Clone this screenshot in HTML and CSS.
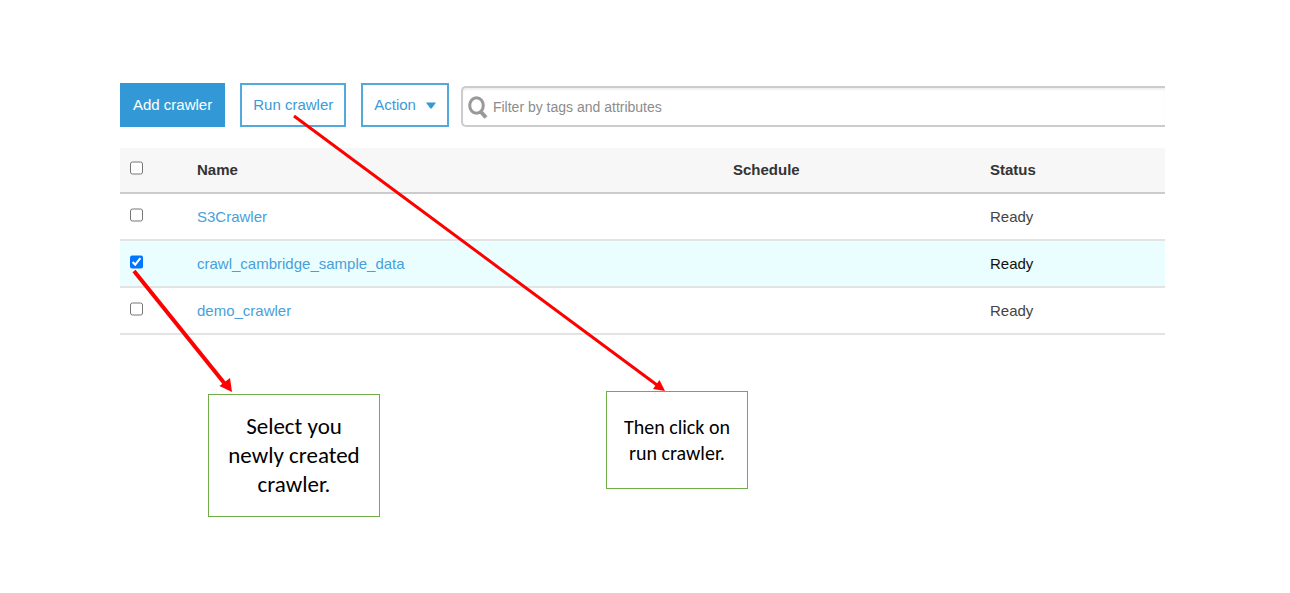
FILE: index.html
```html
<!DOCTYPE html>
<html lang="en">
<head>
<meta charset="utf-8">
<title>Crawlers</title>
<link rel="stylesheet" href="styles.css">
</head>
<body>
<main class="page">
  <div class="toolbar">
    <button class="btn btn-primary" type="button">Add crawler</button>
    <button class="btn" type="button">Run crawler</button>
    <button class="btn btn-menu" type="button">Action
      <svg class="caret" viewBox="0 0 10 7" aria-hidden="true"><path d="M0 0.5h10L5.8 6.3q-.8.9-1.6 0z"/></svg>
    </button>
    <label class="search">
      <svg class="search-icon" viewBox="0 0 20 24" aria-hidden="true"><ellipse cx="8.500" cy="10.500" rx="6.800" ry="7.800"/><path class="handle" d="M13 17l5 5.500"/></svg>
      <input type="text" placeholder="Filter by tags and attributes" aria-label="Filter by tags and attributes">
    </label>
  </div>

  <table class="crawlers">
    <colgroup><col class="col-check"><col><col class="col-schedule"><col class="col-status"></colgroup>
    <thead>
      <tr><th><input type="checkbox" aria-label="Select all"></th><th>Name</th><th>Schedule</th><th>Status</th></tr>
    </thead>
    <tbody>
      <tr><td><input type="checkbox" aria-label="Select S3Crawler"></td><td><a href="#">S3Crawler</a></td><td></td><td>Ready</td></tr>
      <tr class="selected"><td><input type="checkbox" checked aria-label="Select crawl_cambridge_sample_data"></td><td><a href="#">crawl_cambridge_sample_data</a></td><td></td><td>Ready</td></tr>
      <tr><td><input type="checkbox" aria-label="Select demo_crawler"></td><td><a href="#">demo_crawler</a></td><td></td><td>Ready</td></tr>
    </tbody>
  </table>

  <div class="notes">
    <p class="note note-large">Select you newly created crawler.</p>
    <p class="note">Then click on run crawler.</p>
  </div>

  <svg class="arrows" width="760" height="400" viewBox="0 0 760 400" aria-hidden="true">
    <path class="line line-thick" d="M134 271L225 384"/>
    <path class="head" d="M232 392L219.500 386L230 378z"/>
    <path class="line" d="M294 116L657 385"/>
    <path class="head" d="M665 391L653 389L659.500 380z"/>
  </svg>
</main>
</body>
</html>
```
FILE: styles.css
```css
* { box-sizing: border-box; }

body {
  margin: 0;
  background: #fff;
  color: #444;
  font-family: "Liberation Sans", Arial, sans-serif;
  font-size: 15px;
  line-height: 24px;
}

.page {
  position: relative;
  padding: 83px 125px 40px 120px;
}

.toolbar {
  display: flex;
  align-items: flex-end;
  margin-bottom: 21px;
}

.btn {
  flex: none;
  height: 44px;
  margin-right: 15px;
  padding: 0 11px;
  border: 2px solid #53a9dc;
  background: #fff;
  color: #3b9ad9;
  font: inherit;
}

.btn-primary {
  border-color: #3299d6;
  background: #3299d6;
  color: #fff;
}

.btn-menu {
  display: flex;
  align-items: center;
  gap: 10px;
  margin-right: 12px;
}

.caret {
  width: 10px;
  height: 7px;
  fill: #3299d6;
}

.search {
  display: flex;
  flex: 1;
  align-items: center;
  gap: 5px;
  min-width: 0;
  height: 41px;
  padding-left: 5px;
  border: 2px solid #ccc;
  border-right: 0;
  border-radius: 5px 0 0 5px;
  box-shadow: inset 0 2px 2px #f1f1f1;
}

.search-icon {
  flex: none;
  width: 20px;
  height: 24px;
  fill: none;
  stroke: #999;
  stroke-width: 3;
}

.search-icon .handle { stroke-width: 4; }

.search input {
  flex: 1;
  min-width: 0;
  padding: 0;
  border: 0;
  outline: 0;
  background: transparent;
  font: inherit;
  font-size: 14px;
}

.search input::placeholder { color: #8c8c8c; }

.crawlers {
  width: 100%;
  table-layout: fixed;
  border-collapse: separate;
  border-spacing: 0;
}

.col-check { width: 77px; }
.col-schedule { width: 257px; }
.col-status { width: 175px; }

th, td {
  height: 47px;
  padding: 0;
  border-bottom: 2px solid #e3e3e3;
  text-align: left;
  vertical-align: middle;
}

th {
  height: 46px;
  border-color: #ccc;
  background: #f7f7f7;
  color: #333;
}

.selected td {
  background: #ebfeff;
  color: #111;
}

.crawlers a {
  color: #489fd9;
  text-decoration: none;
}

.crawlers input {
  display: block;
  width: 13px;
  height: 14px;
  margin: 0 0 4px 10px;
}

.notes {
  display: flex;
  align-items: flex-start;
  gap: 226px;
  padding: 56px 0 0 88px;
}

.note {
  flex: none;
  width: 142px;
  margin: 0;
  padding: 22px 12px;
  border: 1px solid #70ad47;
  color: #000;
  font-family: Carlito, "Open Sans", "Noto Sans", sans-serif;
  font-size: 20px;
  line-height: 26px;
  text-align: center;
}

.note-large {
  width: 172px;
  margin-top: 3px;
  padding: 17px 16px;
  font-size: 23px;
  line-height: 29px;
}

.arrows {
  position: absolute;
  top: 0;
  left: 0;
  pointer-events: none;
}

.line {
  fill: none;
  stroke: #f00;
  stroke-width: 3;
}

.line-thick { stroke-width: 4; }

.head { fill: #f00; }
```
